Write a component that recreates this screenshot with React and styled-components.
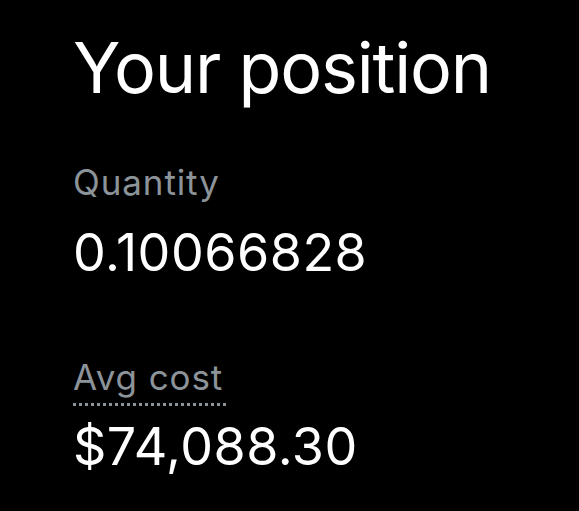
import React from "react";
import styled, { createGlobalStyle } from "styled-components";

const GlobalStyle = createGlobalStyle`
  html, body {
    margin: 0;
    padding: 0;
    background: #000;
  }
  body {
    font-family: Inter, "Noto Sans", sans-serif;
    color: #fff;
    -webkit-font-smoothing: antialiased;
  }
`;

const Panel = styled.section`
  min-height: 511px;
  padding: 28px 0 0 73px;
  box-sizing: border-box;
  background: #000;
`;

const Title = styled.h1`
  margin: 0 0 52px;
  font-size: 70px;
  font-weight: 400;
  line-height: 80px;
  letter-spacing: -1.2px;
`;

const Stat = styled.div`
  display: flex;
  flex-direction: column;
  align-items: flex-start;
  margin-bottom: ${(props) => props.gap || "0"};
`;

const Label = styled.span`
  font-size: 35px;
  line-height: 44px;
  letter-spacing: 0.9px;
  color: #8c9399;
  padding-bottom: ${(props) => (props.dotted ? "7px" : "0")};
  padding-right: ${(props) => (props.dotted ? "5px" : "0")};
  background-image: ${(props) =>
    props.dotted
      ? "linear-gradient(to right, #8c9399 50%, transparent 50%)"
      : "none"};
  background-size: 6px 3px;
  background-repeat: repeat-x;
  background-position: 0 100%;
`;

const Value = styled.span`
  margin-top: ${(props) => props.offset || "19px"};
  font-size: 52px;
  line-height: 60px;
  letter-spacing: 0.5px;
`;

export default function App() {
  return (
    <>
      <GlobalStyle />
      <Panel>
        <Title>Your position</Title>
        <Stat gap="72px">
          <Label>Quantity</Label>
          <Value>0.10066828</Value>
        </Stat>
        <Stat>
          <Label dotted>Avg cost</Label>
          <Value offset="11px">$74,088.30</Value>
        </Stat>
      </Panel>
    </>
  );
}
